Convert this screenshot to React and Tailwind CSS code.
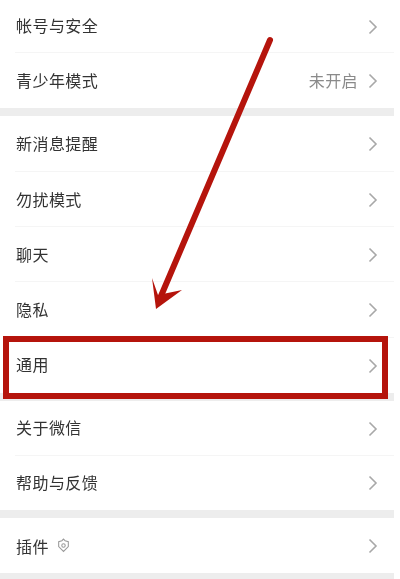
import React from 'react';

const font = "font-['Noto_Sans_CJK_SC','Noto_Sans',sans-serif]";

const Chevron = () => (
  <svg width="10" height="16" viewBox="0 0 10 16" fill="none" stroke="#a8a8a8" strokeWidth="1.6">
    <path d="M1.5 1.5 L8 8 L1.5 14.5" />
  </svg>
);

const ShieldIcon = () => (
  <svg width="13" height="15" viewBox="0 0 12 14" fill="none" stroke="#9a9a9a" strokeWidth="1">
    <path d="M6 1 L7.5 2.5 L10.5 3.5 L10.5 8 L6 12.5 L1.5 8 L1.5 3.5 L4.5 2.5 Z" />
    <circle cx="6" cy="7" r="1.6" />
  </svg>
);

const Row = ({ label, value, icon, height = 'h-[55px]', divider = true, labelMargin = 'mb-[2px]' }) => (
  <div className={`${height} flex items-center pl-[16px] pr-[16px] relative`}>
    <span className={`${labelMargin} text-[16px] leading-none text-[#333333] tracking-[0.45px] blur-[0.5px]`}>{label}</span>
    {icon && <span className="ml-[8px] flex">{icon}</span>}
    <div className="ml-auto flex items-center gap-[10px]">
      {value && <span className="mb-[2px] text-[16px] leading-none text-[#8a8a8a] tracking-[0.4px] blur-[0.5px]">{value}</span>}
      <Chevron />
    </div>
    {divider && <div className="absolute bottom-0 left-[15px] right-0 h-px bg-[#f5f5f5]" />}
  </div>
);

const Gap = () => <div className="h-[8px] bg-[#ededed]" />;

export default function App() {
  return (
    <div className={`${font} w-[400px] h-[579px] bg-white overflow-hidden`}>
      <div className="relative w-[394px] h-[579px]">
        <Row label="帐号与安全" height="h-[53px]" labelMargin="mb-[3px]" />
        <Row label="青少年模式" value="未开启" divider={false} />
        <Gap />
        <Row label="新消息提醒" height="h-[56px]" />
        <Row label="勿扰模式" />
        <Row label="聊天" />
        <Row label="隐私" height="h-[56px]" />
        <Row label="通用" divider={false} labelMargin="mb-[3px]" />
        <Gap />
        <Row label="关于微信" labelMargin="mb-[3px]" />
        <Row label="帮助与反馈" height="h-[54px]" divider={false} />
        <Gap />
        <Row label="插件" icon={<ShieldIcon />} divider={false} labelMargin="mt-[1px]" />
        <Gap />

        {/* red highlight box */}
        <div className="absolute left-[3px] top-[336px] w-[385px] h-[63px] border-[6px] border-[#b5140c]" />

        {/* red arrow */}
        <svg className="absolute left-0 top-0" width="394" height="579" viewBox="0 0 394 579" fill="none">
          <path d="M270 40 L161 296" stroke="#b5140c" strokeWidth="6" strokeLinecap="round" />
          <path d="M156 309 L152 278 L158 295 L182 290 Z" fill="#b5140c" />
        </svg>
      </div>
    </div>
  );
}
